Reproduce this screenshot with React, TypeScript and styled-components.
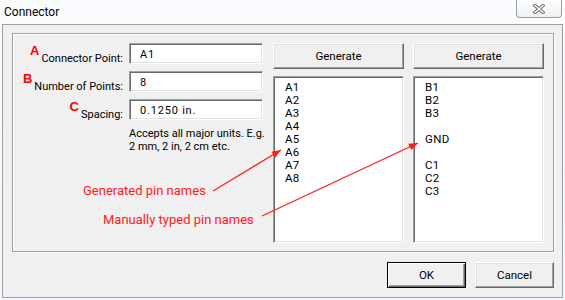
import React from 'react'
import styled, {createGlobalStyle, css} from 'styled-components'

const UI_FONT = `Roboto, "Noto Sans", sans-serif`

const GlobalStyle = createGlobalStyle`
  html, body {
    margin: 0;
    padding: 0;
    background: #f5f8fb;
  }
  body {
    font-family: ${UI_FONT};
    font-size: 11px;
    color: #000;
  }
`

const PINS_A = ['A1', 'A2', 'A3', 'A4', 'A5', 'A6', 'A7', 'A8']
const PINS_B = ['B1', 'B2', 'B3', '', 'GND', '', 'C1', 'C2', 'C3']

const FIELDS = [
    {mark: 'A', label: 'Connector Point:', value: 'A1'},
    {mark: 'B', label: 'Number of Points:', value: '8'},
    {mark: 'C', label: 'Spacing:', value: '0.1250 in.'},
]

const NOTES = [
    {text: 'Generated pin names', x: 83, y: 183, from: [213, 191], to: [281, 150]},
    {text: 'Manually typed pin names', x: 103, y: 212, from: [262, 216], to: [418, 143]},
]

const arrowHead = (from: number[], to: number[]) => {
    const dx = to[0] - from[0]
    const dy = to[1] - from[1]
    const len = Math.sqrt(dx * dx + dy * dy)
    const ux = dx / len
    const uy = dy / len
    const bx = to[0] - ux * 9
    const by = to[1] - uy * 9
    const px = -uy * 3.5
    const py = ux * 3.5
    return `${to[0]},${to[1]} ${bx + px},${by + py} ${bx - px},${by - py}`
}

export default function App() {
    return (
        <>
            <GlobalStyle/>
            <Window>
                <TitleBar>
                    <Title>Connector</Title>
                    <CloseButton>
                        <svg width="12" height="10" viewBox="0 0 12 10">
                            <path d="M2 1.5 L10 8.5 M10 1.5 L2 8.5" stroke="#6b6b6b" strokeWidth="3.2"
                                  strokeLinecap="square"/>
                            <path d="M2 1.5 L10 8.5 M10 1.5 L2 8.5" stroke="#fff" strokeWidth="1.4"
                                  strokeLinecap="square"/>
                        </svg>
                    </CloseButton>
                </TitleBar>
                <Client>
                    <GroupBox>
                        <FormColumn>
                            {FIELDS.map(f =>
                                <React.Fragment key={f.mark}>
                                    <Label><Mark>{f.mark}</Mark>{f.label}</Label>
                                    <TextBox>{f.value}</TextBox>
                                </React.Fragment>
                            )}
                            <Hint>Accepts all major units. E.g.<br/>2 mm, 2 in, 2 cm etc.</Hint>
                        </FormColumn>
                        <PinColumn>
                            <Button>Generate</Button>
                            <ListBox>
                                {PINS_A.map((p, i) => <ListItem key={i}>{p}</ListItem>)}
                            </ListBox>
                        </PinColumn>
                        <PinColumn>
                            <Button>Generate</Button>
                            <ListBox>
                                {PINS_B.map((p, i) => <ListItem key={i}>{p}</ListItem>)}
                            </ListBox>
                        </PinColumn>
                    </GroupBox>
                    <Footer>
                        <Button $primary $width={79}>OK</Button>
                        <Button $width={79}>Cancel</Button>
                    </Footer>
                </Client>
                <Annotations>
                    <svg width="565" height="300">
                        {NOTES.map(n =>
                            <g key={n.text}>
                                <line x1={n.from[0]} y1={n.from[1]} x2={n.to[0]} y2={n.to[1]}
                                      stroke="#ff1a1a" strokeWidth="1.2"/>
                                <polygon points={arrowHead(n.from, n.to)} fill="#ff1a1a"/>
                            </g>
                        )}
                    </svg>
                    {NOTES.map(n =>
                        <Note key={n.text} style={{left: n.x, top: n.y}}>{n.text}</Note>
                    )}
                </Annotations>
            </Window>
        </>
    )
}

const Window = styled.div`
  position: relative;
  width: 565px;
  height: 300px;
  overflow: hidden;
  background: linear-gradient(180deg, #fbfcfe 0%, #f3f6fa 100%);
`

const TitleBar = styled.div`
  height: 24px;
  display: flex;
  justify-content: space-between;
  align-items: flex-start;
  padding: 0 3px 0 4px;
  box-sizing: border-box;
`

const Title = styled.div`
  line-height: 24px;
  font-size: 12px;
  color: #000;
`

const CloseButton = styled.div`
  width: 46px;
  height: 18px;
  box-sizing: border-box;
  border: 1px solid #9a9fa6;
  border-top: none;
  border-radius: 0 0 4px 4px;
  background: linear-gradient(180deg, #fdfdfd 0%, #eef1f4 100%);
  display: flex;
  align-items: center;
  justify-content: center;
`

const Client = styled.div`
  margin: 0 2px 0 2px;
  height: 274px;
  box-sizing: border-box;
  border: 1px solid #a0a0a0;
  background: #f0f0f0;
  padding: 8px 8px 0 9px;
`

const GroupBox = styled.div`
  height: 219px;
  box-sizing: border-box;
  border: 1px solid #a0a0a0;
  box-shadow: inset 1px 1px 0 #fff, 1px 1px 0 #fff;
  display: flex;
  gap: 9px;
  padding: 9px 9px 8px 0;
`

const FormColumn = styled.div`
  width: 250px;
  margin-right: 1px;
  display: grid;
  grid-template-columns: 110px 134px;
  grid-template-rows: 21px 21px 21px auto;
  column-gap: 6px;
  row-gap: 7px;
  align-content: start;
`

const Label = styled.div`
  align-self: center;
  text-align: right;
  white-space: nowrap;
  padding-top: 1px;
`

const Mark = styled.span`
  font-family: "Liberation Sans", Arial, sans-serif;
  font-weight: bold;
  font-size: 13px;
  line-height: 13px;
  color: #ff0000;
  vertical-align: 7px;
  margin-right: 2px;
`

const sunken = css`
  box-sizing: border-box;
  background: #fff;
  border: 1px solid;
  border-color: #a0a0a0 #fff #fff #a0a0a0;
  box-shadow: inset 1px 1px 0 #696969, inset -1px -1px 0 #e3e3e3;
`

const TextBox = styled.div`
  ${sunken};
  display: flex;
  align-items: center;
  padding: 1px 0 0 10px;
  letter-spacing: 0.8px;
`

const Hint = styled.div`
  grid-column: 2;
  line-height: 13px;
  white-space: nowrap;
`

const PinColumn = styled.div`
  width: 131px;
  display: flex;
  flex-direction: column;
  gap: 7px;
`

const Button = styled.div<{ $primary?: boolean, $width?: number }>`
  box-sizing: border-box;
  height: 26px;
  ${p => p.$width && css`width: ${p.$width}px;`}
  background: #f0f0f0;
  display: flex;
  align-items: center;
  justify-content: center;
  font-size: 11.5px;
  border: 1px solid;
  ${p => p.$primary ? css`
    border-color: #000;
    box-shadow: inset 1px 1px 0 #fff, inset -1px -1px 0 #696969, inset -2px -2px 0 #a0a0a0;
  ` : css`
    border-color: #fff #696969 #696969 #fff;
    box-shadow: inset -1px -1px 0 #a0a0a0, inset 1px 1px 0 #e3e3e3;
  `}
`

const ListBox = styled.div`
  ${sunken};
  flex: 1;
  padding: 4px 0 0 11px;
`

const ListItem = styled.div`
  height: 13px;
  line-height: 13px;
  font-size: 11.5px;
  letter-spacing: 0.3px;
`

const Footer = styled.div`
  display: flex;
  justify-content: flex-end;
  gap: 9px;
  margin-top: 10px;
`

const Annotations = styled.div`
  position: absolute;
  inset: 0;
  pointer-events: none;

  svg {
    position: absolute;
    left: 0;
    top: 0;
  }
`

const Note = styled.div`
  position: absolute;
  color: #ff1a1a;
  font-size: 13px;
  line-height: 16px;
  white-space: nowrap;
`
